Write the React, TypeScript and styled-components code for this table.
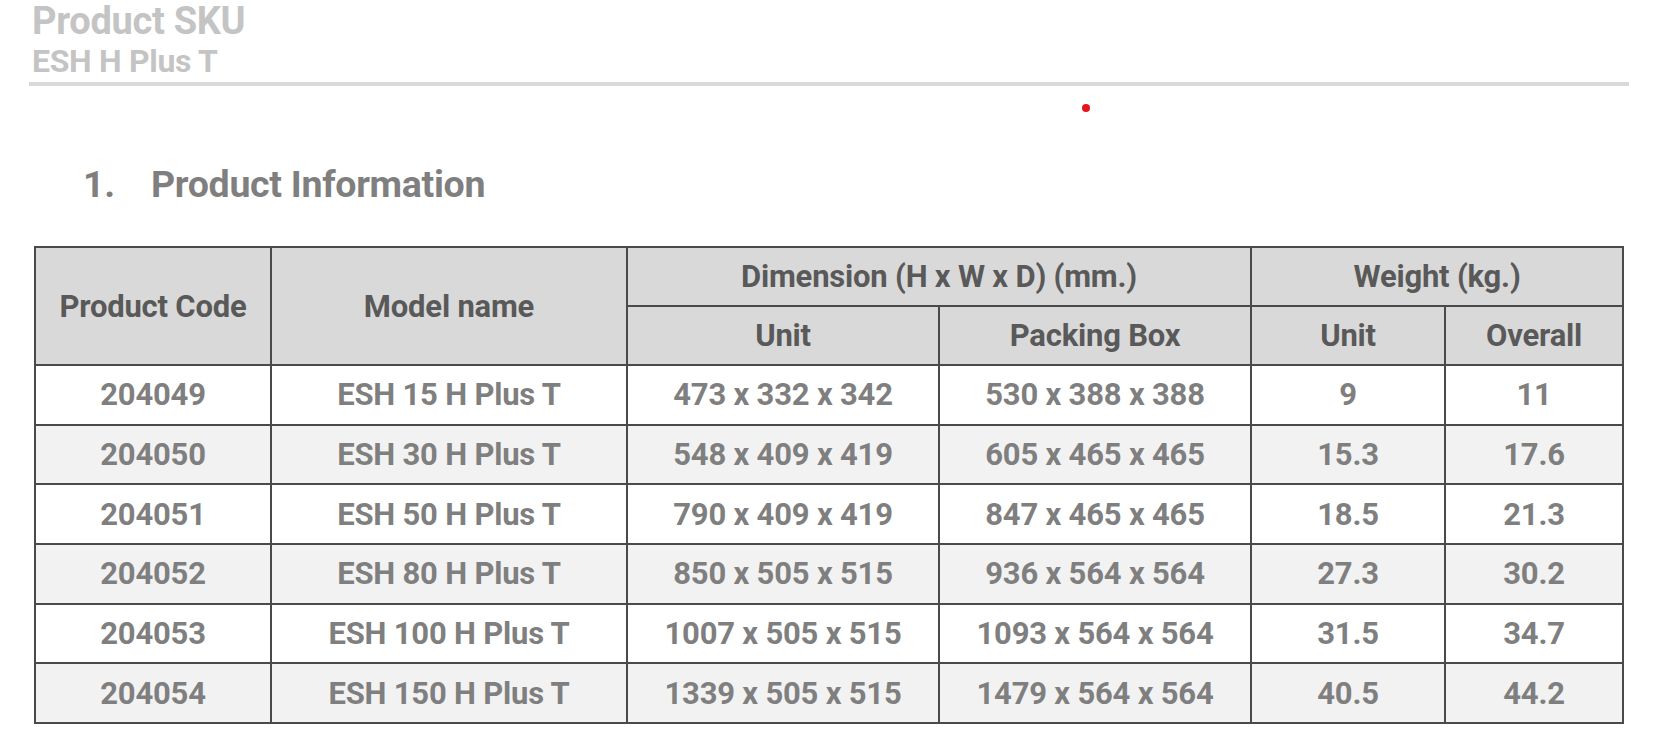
import React from 'react';
import styled, { createGlobalStyle } from 'styled-components';

interface SkuRow {
	code: string;
	model: string;
	unitDim: string;
	boxDim: string;
	unitWeight: string;
	overallWeight: string;
}

const rows: SkuRow[] = [
	{ code: '204049', model: 'ESH 15 H Plus T', unitDim: '473 x 332 x 342', boxDim: '530 x 388 x 388', unitWeight: '9', overallWeight: '11' },
	{ code: '204050', model: 'ESH 30 H Plus T', unitDim: '548 x 409 x 419', boxDim: '605 x 465 x 465', unitWeight: '15.3', overallWeight: '17.6' },
	{ code: '204051', model: 'ESH 50 H Plus T', unitDim: '790 x 409 x 419', boxDim: '847 x 465 x 465', unitWeight: '18.5', overallWeight: '21.3' },
	{ code: '204052', model: 'ESH 80 H Plus T', unitDim: '850 x 505 x 515', boxDim: '936 x 564 x 564', unitWeight: '27.3', overallWeight: '30.2' },
	{ code: '204053', model: 'ESH 100 H Plus T', unitDim: '1007 x 505 x 515', boxDim: '1093 x 564 x 564', unitWeight: '31.5', overallWeight: '34.7' },
	{ code: '204054', model: 'ESH 150 H Plus T', unitDim: '1339 x 505 x 515', boxDim: '1479 x 564 x 564', unitWeight: '40.5', overallWeight: '44.2' },
];

const GlobalStyle = createGlobalStyle`
	html, body {
		margin: 0;
		padding: 0;
		background: #ffffff;
	}
	body {
		font-family: Roboto, 'Liberation Sans', sans-serif;
		font-weight: 700;
	}
`;

const Page = styled.div`
	position: relative;
	width: 1661px;
	height: 739px;
	overflow: hidden;
	padding: 0 0 0 29px;
	box-sizing: border-box;
`;

const DocHeader = styled.header`
	display: flex;
	flex-direction: column;
	width: 1600px;
`;

const DocTitle = styled.div<{ $size: number }>`
	font-size: ${(p) => p.$size}px;
	line-height: normal;
	color: #c4c4c4;
	padding-left: 3px;
	letter-spacing: -0.3px;
	margin-top: -1px;
`;

const Rule = styled.div`
	height: 4px;
	margin-top: 2px;
	background: #d9d9d9;
`;

const Marker = styled.span`
	position: absolute;
	left: 1082px;
	top: 104px;
	width: 8px;
	height: 8px;
	border-radius: 50%;
	background: #e8141c;
`;

const SectionHeading = styled.h2`
	display: flex;
	align-items: baseline;
	margin: 76px 0 0 54px;
	font-size: 37.5px;
	font-weight: 700;
	line-height: normal;
	color: #7f7f7f;
	letter-spacing: -0.3px;
`;

const HeadingNumber = styled.span`
	width: 68px;
`;

const SpecTable = styled.table`
	margin: 40px 0 0 5px;
	width: 1588px;
	border-collapse: collapse;
	table-layout: fixed;
	border: 2px solid #4a4a4a;
	font-size: 31px;
	letter-spacing: -0.2px;
`;

const HeadCell = styled.th`
	height: 57px;
	padding: 0;
	background: #d9d9d9;
	color: #595959;
	font-weight: 700;
	text-align: center;
	vertical-align: middle;
	border: 2px solid #4a4a4a;
`;

const BodyRow = styled.tr<{ $shaded: boolean }>`
	background: ${(p) => (p.$shaded ? '#f2f2f2' : '#ffffff')};
`;

const Cell = styled.td`
	height: 57.7px;
	padding: 0;
	color: #7f7f7f;
	text-align: center;
	vertical-align: middle;
	border: 2px solid #4a4a4a;
`;

export default function App() {
	return (
		<Page>
			<GlobalStyle />
			<DocHeader>
				<DocTitle $size={38}>Product SKU</DocTitle>
				<DocTitle $size={32}>ESH H Plus T</DocTitle>
				<Rule />
			</DocHeader>
			<Marker />
			<SectionHeading>
				<HeadingNumber>1.</HeadingNumber>
				Product Information
			</SectionHeading>
			<SpecTable>
				<colgroup>
					<col style={{ width: 236 }} />
					<col style={{ width: 356 }} />
					<col style={{ width: 312 }} />
					<col style={{ width: 312 }} />
					<col style={{ width: 194 }} />
					<col style={{ width: 178 }} />
				</colgroup>
				<thead>
					<tr>
						<HeadCell rowSpan={2}>Product Code</HeadCell>
						<HeadCell rowSpan={2}>Model name</HeadCell>
						<HeadCell colSpan={2}>Dimension (H x W x D) (mm.)</HeadCell>
						<HeadCell colSpan={2}>Weight (kg.)</HeadCell>
					</tr>
					<tr>
						<HeadCell>Unit</HeadCell>
						<HeadCell>Packing Box</HeadCell>
						<HeadCell>Unit</HeadCell>
						<HeadCell>Overall</HeadCell>
					</tr>
				</thead>
				<tbody>
					{rows.map((r, i) => (
						<BodyRow key={r.code} $shaded={i % 2 === 1}>
							<Cell>{r.code}</Cell>
							<Cell>{r.model}</Cell>
							<Cell>{r.unitDim}</Cell>
							<Cell>{r.boxDim}</Cell>
							<Cell>{r.unitWeight}</Cell>
							<Cell>{r.overallWeight}</Cell>
						</BodyRow>
					))}
				</tbody>
			</SpecTable>
		</Page>
	);
}
